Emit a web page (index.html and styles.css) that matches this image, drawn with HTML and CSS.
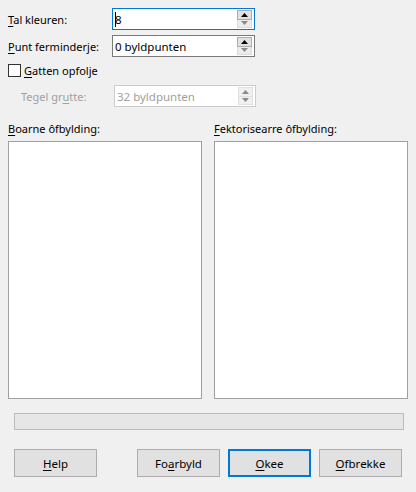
FILE: index.html
```html
<!DOCTYPE html>
<html>
<head>
<meta charset="utf-8">
<link rel="stylesheet" href="styles.css">
</head>
<body>
<div class="dialog">
  <div class="row r1">
    <label class="lbl"><u>T</u>al kleuren:</label>
    <div class="spin focus">
      <div class="val"><span class="caret"></span>8</div>
      <div class="btns">
        <div class="up"><svg width="7" height="4" viewBox="0 0 7 4"><path d="M0 4 L3.5 0 L7 4Z" fill="#000"/></svg></div>
        <div class="down"><svg width="7" height="4" viewBox="0 0 7 4"><path d="M0 0 L3.5 4 L7 0Z" fill="#8a8a8a"/></svg></div>
      </div>
    </div>
  </div>
  <div class="row r2">
    <label class="lbl"><u>P</u>unt ferminderje:</label>
    <div class="spin">
      <div class="val">0 byldpunten</div>
      <div class="btns">
        <div class="up"><svg width="7" height="4" viewBox="0 0 7 4"><path d="M0 4 L3.5 0 L7 4Z" fill="#000"/></svg></div>
        <div class="down"><svg width="7" height="4" viewBox="0 0 7 4"><path d="M0 0 L3.5 4 L7 0Z" fill="#8a8a8a"/></svg></div>
      </div>
    </div>
  </div>
  <div class="check">
    <span class="box"></span>
    <span><u>G</u>atten opfolje</span>
  </div>
  <div class="row r3 disabled">
    <label class="lbl ind">Tegel gr<u>u</u>tte:</label>
    <div class="spin dis">
      <div class="val">32 byldpunten</div>
      <div class="btns">
        <div class="up"><svg width="7" height="4" viewBox="0 0 7 4"><path d="M0 4 L3.5 0 L7 4Z" fill="#8a8a8a"/></svg></div>
        <div class="down"><svg width="7" height="4" viewBox="0 0 7 4"><path d="M0 0 L3.5 4 L7 0Z" fill="#8a8a8a"/></svg></div>
      </div>
    </div>
  </div>
  <div class="images">
    <div class="col">
      <div class="ilbl"><u>B</u>oarne ôfbylding:</div>
      <div class="pane"></div>
    </div>
    <div class="col">
      <div class="ilbl"><u>F</u>ektorisearre ôfbylding:</div>
      <div class="pane"></div>
    </div>
  </div>
  <div class="progress"></div>
  <div class="buttons">
    <button class="btn"><u>H</u>elp</button>
    <div class="spacer"></div>
    <button class="btn">Fo<u>a</u>rbyld</button>
    <button class="btn def"><u>O</u>kee</button>
    <button class="btn"><u>O</u>fbrekke</button>
  </div>
</div>
</body>
</html>
```

FILE: styles.css
```css
html, body {
  margin: 0;
  padding: 0;
  background: #f0f0f0;
}
body {
  font-family: "Noto Sans", "Open Sans", sans-serif;
  font-size: 11px;
  color: #000;
  width: 416px;
  height: 492px;
  overflow: hidden;
}
.dialog {
  padding: 8px 8px 0 8px;
  display: flex;
  flex-direction: column;
}
u { text-decoration-thickness: 1px; text-underline-offset: 2px; }
.row {
  display: flex;
  align-items: center;
  height: 22px;
}
.r2 { margin-top: 5px; }
.r3 { margin-top: 7px; }
.lbl {
  width: 104px;
  flex: none;
}
.lbl.ind { padding-left: 13px; width: 92px; }
.spin {
  width: 141px;
  height: 20px;
  border: 1px solid #7a7a7a;
  background: #fff;
  display: flex;
  align-items: center;
}
.spin.focus { border-color: #0078d7; }
.spin.dis { border-color: #cccccc; color: #a0a0a0; width: 140px; margin-left: 1px; }
.disabled .lbl { color: #a0a0a0; }
.val {
  flex: 1;
  padding-left: 2px;
  display: flex;
  align-items: center;
  font-size: 11.5px;
}
.caret {
  display: inline-block;
  width: 1px;
  height: 15px;
  background: #000;
  margin-right: -1px;
}
.btns {
  width: 15px;
  display: flex;
  flex-direction: column;
  margin-right: 2px;
  height: 18px;
}
.btns .up, .btns .down {
  flex: 1;
  display: flex;
  align-items: center;
  justify-content: center;
  box-sizing: border-box;
}
.btns .up { background: #e1e1e1; border: 1px solid #adadad; }
.btns .down { background: #ebebeb; border: 1px solid #dcdcdc; border-top: none; }
.dis .btns .up { background: #f0f0f0; border-color: #e0e0e0; }
.dis .btns .down { background: #f0f0f0; border-color: #e0e0e0; }
.check {
  display: flex;
  align-items: center;
  height: 15px;
  margin-top: 6px;
}
.box {
  width: 11px;
  height: 11px;
  border: 1px solid #333;
  background: #fff;
  margin-right: 3px;
}
.images {
  display: flex;
  gap: 12px;
  margin-top: 14px;
}
.col { width: 194px; display: flex; flex-direction: column; }
.ilbl { height: 20px; line-height: 16px; }
.pane {
  height: 256px;
  border: 1px solid #a0a0a0;
  background: #fff;
}
.progress {
  margin: 14px 4px 0 6px;
  height: 15px;
  border: 1px solid #bcbcbc;
  background: #e6e6e6;
}
.buttons {
  display: flex;
  margin: 19px 6px 0 6px;
  gap: 8px;
}
.spacer { width: 24px; }
.btn {
  width: 83px;
  height: 28px;
  font: inherit;
  font-size: 11.5px;
  color: #000;
  background: #e1e1e1;
  border: 1px solid #adadad;
  padding: 0;
  margin: 0;
}
.btn.def { border: 2px solid #0078d7; }
```
